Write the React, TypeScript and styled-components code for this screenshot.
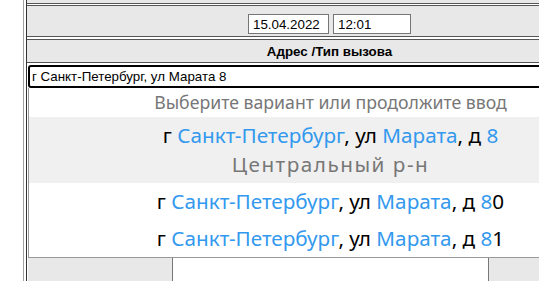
import styled, { createGlobalStyle } from 'styled-components'

const GlobalStyle = createGlobalStyle`
  * { box-sizing: border-box; }
  html, body {
    margin: 0;
    padding: 0;
    background: #fff;
    overflow: hidden;
    font-family: "Liberation Sans", Arial, sans-serif;
    font-size: 13.33px;
  }
`;

const Frame = styled.div`
  margin-left: 23px;
  padding-left: 2px;
  border-left: 1px solid #a0a0a0;
  height: 281px;
`;

const Board = styled.div`
  width: 607px;
  height: 100%;
  border-left: 1px solid #333;
  display: flex;
  flex-direction: column;
`;

const TopStrip = styled.div`
  height: 4px;
  background: #e8e8e8;
  border-bottom: 1px solid #555;
  border-right: 1px solid #555;
`;

const ToolRow = styled.div`
  margin-top: 1px;
  height: 32px;
  background: #e8e8e8;
  border: 1px solid #555;
  border-left: none;
  display: flex;
  justify-content: center;
  align-items: flex-end;
  gap: 4px;
  padding-bottom: 2px;
`;

const Field = styled.span<{ $w: number }>`
  display: inline-flex;
  align-items: center;
  width: ${p => p.$w}px;
  height: 20px;
  padding: 0 4px;
  background: #fff;
  border: 1px solid #767676;
  color: #000;
`;

const HeaderRow = styled.div`
  margin-top: 2px;
  height: 24px;
  padding-top: 4px;
  background: #e8e8e8;
  border: 1px solid #555;
  border-left: none;
  text-align: center;
  font-weight: bold;
  line-height: 16px;
`;

const AddressField = styled.div`
  margin-top: 2px;
  margin-left: 1px;
  height: 23px;
  padding: 0 2px;
  display: flex;
  align-items: center;
  background: #fff;
  border: 2px solid #000;
  border-radius: 3px;
`;

const Suggest = styled.div`
  margin-left: 1px;
  border: 1px solid #999;
  border-top: none;
  background: #fff;
  font-family: "Noto Sans", "Open Sans", sans-serif;
  line-height: 29px;
  text-align: center;
  color: #000;
`;

const Hint = styled.div`
  font-size: 17.7px;
  color: #777;
`;

const Option = styled.div<{ $active?: boolean }>`
  padding: 4px 0;
  background: ${p => (p.$active ? '#f0f0f0' : '#fff')};
`;

const AddressLine = styled.div`
  font-size: 20.7px;
`;

const Mark = styled.span`
  color: #3399ee;
`;

const District = styled.div`
  font-size: 20.7px;
  letter-spacing: 1.5px;
  color: #777;
`;

const BottomRow = styled.div`
  flex: 1;
  margin-left: 1px;
  display: grid;
  grid-template-columns: 145px 316px 1fr;
`;

const Cell = styled.div<{ $gray?: boolean; $divider?: boolean }>`
  background: ${p => (p.$gray ? '#e8e8e8' : '#fff')};
  border-right: ${p => (p.$divider ? '1px solid #777' : 'none')};
`;

const variants = [
  { house: '8', tail: '', district: 'Центральный р-н' },
  { house: '8', tail: '0' },
  { house: '8', tail: '1' },
];

const App = () => {
  return (
    <>
      <GlobalStyle />
      <Frame>
        <Board>
          <TopStrip />
          <ToolRow>
            <Field $w={81}>15.04.2022</Field>
            <Field $w={78}>12:01</Field>
          </ToolRow>
          <HeaderRow>Адрес /Тип вызова</HeaderRow>
          <AddressField>г Санкт-Петербург, ул Марата 8</AddressField>
          <Suggest>
            <Hint>Выберите вариант или продолжите ввод</Hint>
            {variants.map((v, i) => (
              <Option key={i} $active={i === 0}>
                <AddressLine>
                  г <Mark>Санкт-Петербург</Mark>, ул <Mark>Марата</Mark>, д <Mark>{v.house}</Mark>{v.tail}
                </AddressLine>
                {v.district && <District>{v.district}</District>}
              </Option>
            ))}
          </Suggest>
          <BottomRow>
            <Cell $gray $divider />
            <Cell $divider />
            <Cell $gray />
          </BottomRow>
        </Board>
      </Frame>
    </>
  )
}

export default App
